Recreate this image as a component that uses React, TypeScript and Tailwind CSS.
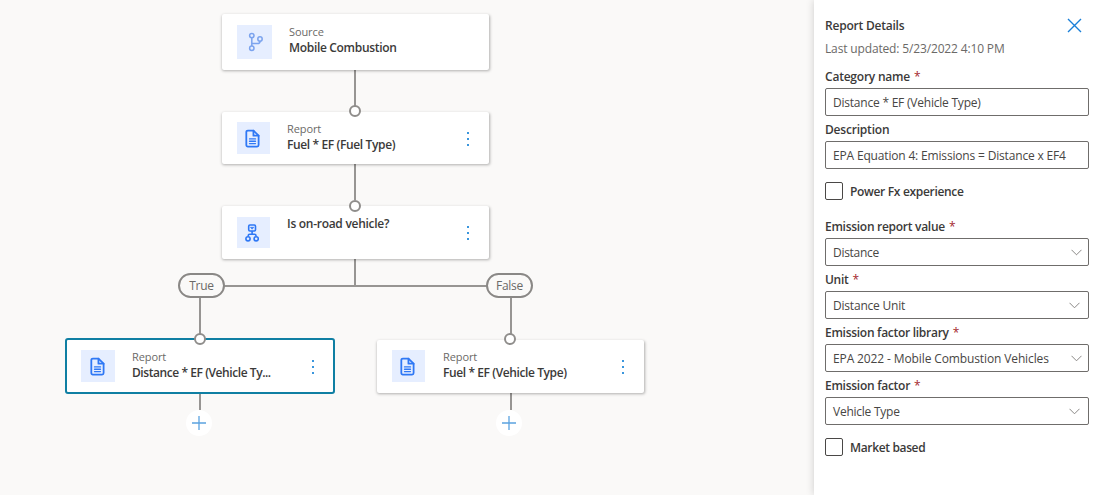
import type { ReactNode } from "react";

function DocIcon({ offset = "mr-0.5" }: { offset?: string }) {
  return (
    <svg className={offset} width="15" height="19" viewBox="0 0 16 20" fill="none" stroke="#2f78f5" strokeWidth="1.9" strokeLinejoin="round" strokeLinecap="round">
      <path d="M3 1.5h6l5.5 5.5v10a1.6 1.6 0 0 1-1.6 1.6H3A1.6 1.6 0 0 1 1.4 17V3.1A1.6 1.6 0 0 1 3 1.5z" />
      <path d="M9 1.5V7h5.5" />
      <path d="M4.8 10.4h6.4M4.8 12.9h6.4M4.8 15.4h6.4" strokeWidth="1.4" />
    </svg>
  );
}

function BranchIcon() {
  return (
    <svg className="ml-0.5" width="16" height="20" viewBox="0 0 16 20" fill="none" stroke="#7ba3ee" strokeWidth="1.5">
      <circle cx="3.8" cy="3.6" r="2.2" />
      <circle cx="12" cy="7" r="2.2" />
      <circle cx="3.8" cy="16.2" r="2.2" />
      <path d="M3.8 5.8V14M12 9.2c0 1.6-.9 2.4-2.4 2.4H3.8" />
    </svg>
  );
}

function TreeIcon() {
  return (
    <svg className="mr-[3px]" width="14" height="18" viewBox="0 0 14 18" fill="none" stroke="#2f78f5" strokeWidth="1.6">
      <rect x="3.7" y="1" width="6.8" height="6" rx="1.2" />
      <path d="M5.4 3.3h3.4L7.1 5.2z" fill="#2f78f5" strokeWidth=".6" />
      <path d="M7.1 7v3.4M3.2 12.3v-.5c0-1 .5-1.5 1.5-1.5h4.8c1 0 1.5.5 1.5 1.5v.5" />
      <circle cx="3" cy="14.8" r="2.1" />
      <circle cx="11.2" cy="14.8" r="2.1" />
    </svg>
  );
}

type NodeProps = {
  place: string;
  tile: string;
  icon: ReactNode;
  text: string;
  kind?: string;
  title: string;
  titleTracking: string;
  menu?: string;
};

function FlowNode({ place, tile, icon, text, kind, title, titleTracking, menu }: NodeProps) {
  return (
    <div className={`absolute flex items-start bg-white ${place}`}>
      <div className={`flex shrink-0 items-center justify-center bg-[#e6eeff] ${tile}`}>{icon}</div>
      <div className={`flex flex-col whitespace-nowrap leading-4 ${text}`}>
        {kind && <span className="text-[11px] tracking-[-0.1px] text-[#6b6967]">{kind}</span>}
        <span className={`text-xs font-semibold text-[#3b3a39] ${titleTracking}`}>{title}</span>
      </div>
      {menu && (
        <div className={`ml-auto flex flex-col gap-1 ${menu}`}>
          <i className="size-0.5 bg-[#3a96dd]" />
          <i className="size-0.5 bg-[#3a96dd]" />
          <i className="size-0.5 bg-[#3a96dd]" />
        </div>
      )}
    </div>
  );
}

function Port({ place }: { place: string }) {
  return <div className={`absolute size-3 rounded-full border-2 border-[#8f8d8b] bg-white ${place}`} />;
}

function Wire({ place }: { place: string }) {
  return <div className={`absolute bg-[#979593] ${place}`} />;
}

function AddButton({ place }: { place: string }) {
  return (
    <div className={`absolute flex size-[26px] items-center justify-center rounded-full bg-white ${place}`}>
      <svg width="14" height="14" viewBox="0 0 14 14" stroke="#5ba3e0" strokeWidth="1.3">
        <path d="M7 0v14M0 7h14" />
      </svg>
    </div>
  );
}

function Label({ children, required, tracking }: { children: string; required?: boolean; tracking: string }) {
  return (
    <div className="flex h-[25px] items-center gap-1 whitespace-nowrap pt-0.5 text-xs font-semibold text-[#3b3a39]">
      <span className={tracking}>{children}</span>
      {required && <span className="font-normal text-[#a4262c]">*</span>}
    </div>
  );
}

function Field({ children, tracking, arrow }: { children: string; tracking: string; arrow?: string }) {
  return (
    <div className="flex h-7 items-center rounded-[2px] border border-[#6f6d6b] bg-white pl-[7px] text-xs text-[#484644]">
      <span className={`whitespace-nowrap pt-0.5 ${tracking}`}>{children}</span>
      {arrow && (
        <svg className={`ml-auto ${arrow}`} width="11" height="7" viewBox="0 0 11 7" fill="none" stroke="#8a8886" strokeWidth="1">
          <path d="M.5.8l5 5 5-5" />
        </svg>
      )}
    </div>
  );
}

function Check({ children, tracking }: { children: string; tracking: string }) {
  return (
    <div className="flex h-[18px] items-center gap-[7px] whitespace-nowrap text-xs font-semibold text-[#3b3a39]">
      <div className="size-[18px] rounded-[2px] border border-[#4a4846]" />
      <span className={`pt-0.5 ${tracking}`}>{children}</span>
    </div>
  );
}

const shadow = "rounded-[2px] shadow-[0.5px_1px_3px_rgba(0,0,0,0.3)]";
const pill =
  "absolute flex h-[25px] w-[47px] items-center justify-center rounded-full border-2 border-[#8a8886] bg-[#faf9f8] text-xs tracking-[-0.3px] text-[#6b6967]";

export default function App() {
  return (
    <div className="flex h-[495px] w-[1100px] overflow-hidden bg-[#faf9f8] font-['Open_Sans','Noto_Sans',sans-serif]">
      <main className="relative flex-1">
        <Wire place="left-[354px] top-[70px] h-[36px] w-[2px]" />
        <Wire place="left-[354px] top-[164px] h-[36px] w-[2px]" />
        <Wire place="left-[354px] top-[259px] h-[27px] w-[2px]" />
        <Wire place="left-[222px] top-[285px] h-[2px] w-[266px]" />
        <Wire place="left-[199px] top-[296px] h-[40px] w-[2px]" />
        <Wire place="left-[510px] top-[296px] h-[40px] w-[2px]" />
        <Wire place="left-[199px] top-[393px] h-[17px] w-[2px]" />
        <Wire place="left-[510px] top-[392px] h-[18px] w-[2px]" />

        <FlowNode place={`left-[222px] top-[14px] h-[56px] w-[267px] ${shadow}`} tile="ml-[15px] mt-[11px] h-[34px] w-[35px]" icon={<BranchIcon />} text="ml-[17px] mt-[10px]" kind="Source" title="Mobile Combustion" titleTracking="tracking-[-0.32px]" />
        <FlowNode place={`left-[222px] top-[112px] h-[52px] w-[267px] ${shadow}`} tile="ml-[15px] mt-[10px] h-8 w-[33px]" icon={<DocIcon offset="mr-[3px]" />} text="ml-[17px] mt-[9px]" kind="Report" title="Fuel * EF (Fuel Type)" titleTracking="tracking-[-0.37px]" menu="mr-5 mt-5" />
        <FlowNode place={`left-[222px] top-[206px] h-[53px] w-[267px] ${shadow}`} tile="ml-[15px] mt-[11px] h-[31px] w-[33px]" icon={<TreeIcon />} text="ml-[17px] mt-[10px]" title="Is on-road vehicle?" titleTracking="tracking-[-0.28px]" menu="mr-5 mt-5" />
        <FlowNode place="left-[65px] top-[338px] h-[56px] w-[270px] border-2 border-[#0f7fa3] rounded-[3px]" tile="ml-[14px] mt-[10px] h-8 w-[34px]" icon={<DocIcon />} text="ml-[17px] mt-[9px]" kind="Report" title="Distance * EF (Vehicle Ty..." titleTracking="tracking-[-0.43px]" menu="mr-[19px] mt-5" />
        <FlowNode place={`left-[377px] top-[340px] h-[53px] w-[267px] ${shadow}`} tile="ml-[15px] mt-[10px] h-8 w-[33px]" icon={<DocIcon />} text="ml-[18px] mt-[9px]" kind="Report" title="Fuel * EF (Vehicle Type)" titleTracking="tracking-[-0.4px]" menu="mr-5 mt-5" />

        <Port place="left-[349px] top-[105px]" />
        <Port place="left-[349px] top-[200px]" />
        <Port place="left-[194px] top-[333px]" />
        <Port place="left-[504px] top-[333px]" />

        <div className={`left-[178px] top-[273px] ${pill}`}>True</div>
        <div className={`left-[486px] top-[273px] ${pill}`}>False</div>
        <AddButton place="left-[186px] top-[410px]" />
        <AddButton place="left-[496px] top-[410px]" />
      </main>

      <aside className="w-[286px] bg-white px-[11px] pt-4 shadow-[0_0_8px_rgba(0,0,0,0.18)]">
        <header className="flex h-[47px] justify-between">
          <div className="whitespace-nowrap pt-px text-xs">
            <h2 className="h-[23px] font-semibold leading-[18px] tracking-[-0.22px] text-[#3b3a39]">Report Details</h2>
            <p className="leading-[18px] tracking-[-0.15px] text-[#6b6967]">Last updated: 5/23/2022 4:10 PM</p>
          </div>
          <svg className="mr-[7px] mt-[2px]" width="15" height="15" viewBox="0 0 15 15" stroke="#1a7fd8" strokeWidth="1.4">
            <path d="M1 1l13 13M14 1L1 14" />
          </svg>
        </header>
        <Label required tracking="tracking-[-0.22px]">Category name</Label>
        <Field tracking="tracking-[-0.22px]">Distance * EF (Vehicle Type)</Field>
        <Label tracking="tracking-[-0.2px]">Description</Label>
        <Field tracking="tracking-[-0.17px]">EPA Equation 4: Emissions = Distance x EF4</Field>
        <div className="py-[13px]">
          <Check tracking="tracking-[-0.32px]">Power Fx experience</Check>
        </div>
        <Label required tracking="tracking-[-0.28px]">Emission report value</Label>
        <Field tracking="tracking-[-0.28px]" arrow="mr-[6px]">Distance</Field>
        <Label required tracking="tracking-[-0.3px]">Unit</Label>
        <Field tracking="tracking-[-0.2px]" arrow="mr-2">Distance Unit</Field>
        <Label required tracking="tracking-[-0.28px]">Emission factor library</Label>
        <Field tracking="tracking-[-0.12px]" arrow="mr-[6px]">EPA 2022 - Mobile Combustion Vehicles</Field>
        <Label required tracking="tracking-[-0.27px]">Emission factor</Label>
        <Field tracking="tracking-[-0.25px]" arrow="mr-2">Vehicle Type</Field>
        <div className="pt-[13px]">
          <Check tracking="tracking-[-0.35px]">Market based</Check>
        </div>
      </aside>
    </div>
  );
}
